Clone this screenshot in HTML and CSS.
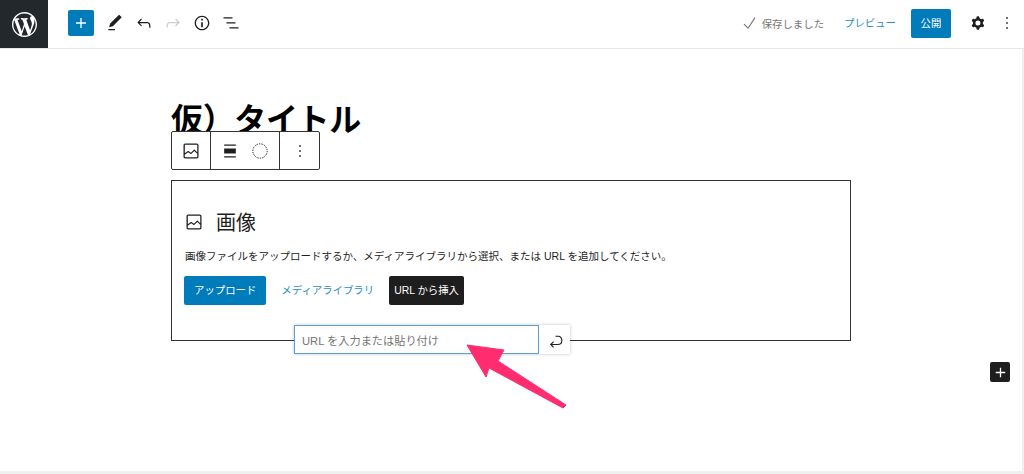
FILE: index.html
```html
<!DOCTYPE html>
<html lang="ja">
<head>
<meta charset="utf-8">
<title>仮）タイトル</title>
<link rel="stylesheet" href="styles.css">
</head>
<body>
<div class="app">
  <header class="topbar">
    <div class="logo">
      <svg class="logo-mark" viewBox="0 0 20 20"><path d="M20 10c0-5.51-4.49-10-10-10C4.48 0 0 4.49 0 10c0 5.52 4.48 10 10 10 5.51 0 10-4.48 10-10zM7.78 15.37L4.37 6.22c.55-.02 1.17-.08 1.17-.08.5-.06.44-1.13-.06-1.11 0 0-1.45.11-2.37.11-.18 0-.37 0-.58-.01C4.12 2.69 6.87 1.11 10 1.11c2.33 0 4.45.87 6.05 2.34-.68-.11-1.65.39-1.65 1.58 0 .74.45 1.36.9 2.1.35.61.55 1.36.55 2.46 0 1.49-1.4 5-1.4 5l-3.03-8.37c.54-.02.82-.17.82-.17.5-.05.44-1.25-.06-1.22 0 0-1.44.12-2.38.12-.87 0-2.33-.12-2.33-.12-.5-.03-.56 1.2-.06 1.22l.92.08 1.26 3.41zM17.41 10c.24-.64.74-1.87.43-4.25.7 1.29 1.05 2.71 1.05 4.25 0 3.29-1.73 6.24-4.4 7.78.97-2.59 1.94-5.2 2.92-7.78zM6.1 18.09C3.12 16.65 1.11 13.53 1.11 10c0-1.3.23-2.48.72-3.59C3.25 10.3 4.67 14.2 6.1 18.09zm4.03-6.63l2.58 6.98c-.86.29-1.76.45-2.71.45-.79 0-1.57-.11-2.29-.33.81-2.38 1.62-4.74 2.42-7.1z"/></svg>
    </div>
    <div class="tools">
      <span class="add"><svg class="ico-add" viewBox="0 0 24 24"><path d="M18 11.2h-5.2V6h-1.6v5.2H6v1.6h5.2V18h1.6v-5.2H18z"/></svg></span>
      <svg class="ico" viewBox="0 0 24 24"><path d="M20.1 5.1L16.9 2 6.2 12.7l-1.3 4.4 4.5-1.3L20.1 5.1zM4 20.8h8v-1.5H4v1.5z"/></svg>
      <svg class="ico" viewBox="0 0 24 24"><path d="M18.3 11.7c-.6-.6-1.4-.9-2.3-.9H6.7l2.9-3.3-1.1-1-4.5 5L8.5 16l1-1-2.7-2.7H16c.5 0 .9.2 1.3.5 1 1 1 3.4 1 4.5v.3h1.5v-.2c0-1.5 0-4.3-1.5-5.7z"/></svg>
      <svg class="ico ico-off" viewBox="0 0 24 24"><path d="M15.6 6.5l-1.1 1 2.9 3.3H8c-.9 0-1.7.3-2.3.9-1.4 1.5-1.4 4.2-1.4 5.6v.2h1.5v-.3c0-1.1 0-3.5 1-4.5.3-.3.7-.5 1.3-.5h9.2L14.5 15l1.1 1.1 4.6-4.6-4.6-5z"/></svg>
      <svg class="ico" viewBox="0 0 24 24"><path d="M12 3.2c-4.8 0-8.8 3.9-8.8 8.8 0 4.8 3.9 8.8 8.8 8.8 4.8 0 8.8-3.9 8.8-8.8 0-4.8-4-8.8-8.8-8.8zm0 16c-4 0-7.2-3.3-7.2-7.2C4.8 8 8 4.8 12 4.8s7.2 3.3 7.2 7.2c0 4-3.2 7.2-7.2 7.2zM11 17h2v-6h-2v6zm0-8h2V7h-2v2z"/></svg>
      <svg class="ico" viewBox="0 0 24 24"><path d="M13.8 5.2H3v1.5h10.8V5.2zm-3.6 12v1.5H21v-1.5H10.2zm7.2-6H6.6v1.5h10.8v-1.5z"/></svg>
    </div>
    <div class="actions">
      <span class="saved"><svg class="ico-check" viewBox="0 0 20 20"><path d="M5 11.2l4 4L16 4.6"/></svg>保存しました</span>
      <span class="preview">プレビュー</span>
      <span class="publish">公開</span>
      <svg class="ico ico-cog" viewBox="0 0 24 24"><path fill-rule="evenodd" d="M10.289 4.836A1 1 0 0111.275 4h1.306a1 1 0 01.987.836l.244 1.466c.787.26 1.503.679 2.108 1.218l1.393-.522a1 1 0 011.216.437l.653 1.13a1 1 0 01-.23 1.273l-1.148.944a6.025 6.025 0 010 2.435l1.149.946a1 1 0 01.23 1.272l-.653 1.13a1 1 0 01-1.216.437l-1.394-.522c-.605.54-1.32.958-2.108 1.218l-.244 1.466a1 1 0 01-.987.836h-1.306a1 1 0 01-.986-.836l-.244-1.466a5.995 5.995 0 01-2.108-1.218l-1.394.522a1 1 0 01-1.217-.436l-.653-1.131a1 1 0 01.23-1.272l1.149-.946a6.026 6.026 0 010-2.435l-1.148-.944a1 1 0 01-.23-1.272l.653-1.131a1 1 0 011.217-.437l1.393.522a5.994 5.994 0 012.108-1.218l.244-1.466zM14.929 12a3 3 0 11-6 0 3 3 0 016 0z"/></svg>
      <svg class="ico ico-more" viewBox="0 0 24 24"><path d="M13 19h-2v-2h2v2zm0-6h-2v-2h2v2zm0-6h-2V5h2v2z"/></svg>
    </div>
  </header>
  <main class="canvas">
    <div class="column">
      <h1 class="post-title">仮）タイトル</h1>
      <div class="block-toolbar">
        <div class="tb-group">
          <svg class="tb-ico" viewBox="0 0 24 24"><path d="M19 3H5c-1.1 0-2 .9-2 2v14c0 1.1.9 2 2 2h14c1.1 0 2-.9 2-2V5c0-1.1-.9-2-2-2zM5 4.5h14c.3 0 .5.2.5.5v8.4l-3-2.9c-.3-.3-.8-.3-1 0L11.9 14 9 12c-.3-.2-.6-.2-.8 0l-3.6 2.6V5c-.1-.3.1-.5.4-.5zm14 15H5c-.3 0-.5-.2-.5-.5v-2.4l4.1-3 3 1.9c.3.2.7.2.9-.1L16 12l3.5 3.4V19c0 .3-.2.5-.5.5z"/></svg>
        </div>
        <div class="tb-group tb-middle">
          <svg class="tb-ico" viewBox="0 0 24 24"><path d="M5 15h14V9H5v6zm0 4.8h14v-1.5H5v1.5zM5 4.2v1.5h14V4.2H5z"/></svg>
          <svg class="tb-ico" viewBox="0 0 24 24"><circle class="dotted" cx="12" cy="12" r="8.6"/></svg>
        </div>
        <div class="tb-group tb-last">
          <svg class="tb-ico" viewBox="0 0 24 24"><path d="M13 19h-2v-2h2v2zm0-6h-2v-2h2v2zm0-6h-2V5h2v2z"/></svg>
        </div>
      </div>
      <section class="placeholder">
        <div class="ph-label">
          <svg class="ph-ico" viewBox="0 0 24 24"><path d="M19 3H5c-1.1 0-2 .9-2 2v14c0 1.1.9 2 2 2h14c1.1 0 2-.9 2-2V5c0-1.1-.9-2-2-2zM5 4.5h14c.3 0 .5.2.5.5v8.4l-3-2.9c-.3-.3-.8-.3-1 0L11.9 14 9 12c-.3-.2-.6-.2-.8 0l-3.6 2.6V5c-.1-.3.1-.5.4-.5zm14 15H5c-.3 0-.5-.2-.5-.5v-2.4l4.1-3 3 1.9c.3.2.7.2.9-.1L16 12l3.5 3.4V19c0 .3-.2.5-.5.5z"/></svg>
          <span>画像</span>
        </div>
        <p class="ph-desc">画像ファイルをアップロードするか、メディアライブラリから選択、または URL を追加してください。</p>
        <div class="ph-buttons">
          <span class="btn btn-primary">アップロード</span>
          <span class="btn btn-link">メディアライブラリ</span>
          <span class="btn btn-dark">URL から挿入</span>
        </div>
        <div class="url-popover">
          <div class="url-input">URL を入力または貼り付け</div>
          <div class="url-submit">
            <svg class="ico" viewBox="0 0 20 20"><path class="return" d="M10.5 6.3h2.7c5 0 5 8.2-.5 8.2H6.2M8.6 11.6l-2.9 2.9 2.9 2.8"/></svg>
          </div>
        </div>
      </section>
    </div>
    <span class="inserter"><svg class="ico-add" viewBox="0 0 24 24"><path d="M18 11.2h-5.2V6h-1.6v5.2H6v1.6h5.2V18h1.6v-5.2H18z"/></svg></span>
  </main>
  <svg class="annotation" viewBox="0 0 1024 474"><polygon points="467,345 504,350 498,361 566,405 563,408 489,368 486,377"/></svg>
</div>
</body>
</html>
```
FILE: styles.css
```css
* { box-sizing: border-box; }
html, body { margin: 0; padding: 0; background: #fff; }
body {
  font-family: "Liberation Sans", "Noto Sans CJK JP", sans-serif;
  font-size: 10.4px;
  color: #1e1e1e;
  overflow: hidden;
}
.app { position: relative; width: 1024px; height: 474px; display: flex; flex-direction: column; overflow: hidden; }

.topbar { flex: 0 0 49px; display: flex; align-items: flex-start; border-bottom: 1px solid #e8e8e8; }
.logo { width: 48px; height: 48px; background: #23282d; display: flex; align-items: center; justify-content: center; }
.logo-mark { width: 25px; height: 25px; fill: #fff; }
.tools { display: flex; align-items: center; height: 46px; padding-left: 20px; }
.add { width: 26px; height: 26px; border-radius: 2px; background: #007cba; display: flex; align-items: center; justify-content: center; margin-right: 11px; }
.ico-add { width: 20px; height: 20px; fill: #fff; }
.ico { width: 20px; height: 20px; fill: #1e1e1e; flex: none; margin-right: 9px; }
.ico-off { fill: #c9cdd0; }
.actions { margin-left: auto; display: flex; align-items: center; height: 46px; }
.saved { display: flex; align-items: center; color: #757575; margin-right: 20px; font-size: 10.4px; }
.ico-check { width: 20px; height: 20px; fill: none; stroke: #757575; stroke-width: 1.1; margin-right: 3px; }
.preview { color: #2a8cc4; margin: 0 15px 2px 0; font-size: 10.4px; }
.publish { width: 40px; height: 29px; padding-bottom: 2px; border-radius: 2px; background: #007cba; color: #fff; display: flex; align-items: center; justify-content: center; margin-right: 17px; }
.ico-cog { margin-right: 9px; }
.ico-more { margin-right: 7px; }

.canvas { flex: 1; position: relative; padding: 0 2px; border-right: 2px solid #f0f0f0; border-bottom: 3px solid #f0f0f0; }
.column { position: relative; width: 680px; margin: 0 auto; padding-top: 46px; }
.post-title { margin: 0; height: 85px; font-size: 32px; line-height: 44px; letter-spacing: -0.35px; font-weight: 700; color: #000; font-family: "Noto Sans CJK JP", sans-serif; white-space: nowrap; }
.block-toolbar { position: absolute; left: 0; top: 82px; height: 39px; display: flex; background: #fff; border: 1px solid #333; border-radius: 2px; }
.tb-group { display: flex; align-items: center; justify-content: center; padding: 0 9px; border-left: 1px solid #333; }
.tb-group:first-child { border-left: 0; }
.tb-last { padding: 0 9px 0 10px; }
.tb-middle { gap: 10px; }
.tb-ico { width: 20px; height: 20px; fill: #1e1e1e; }
.dotted { fill: none; stroke: #1e1e1e; stroke-width: 1.2; stroke-dasharray: 1.6 1.4; }

.placeholder { position: relative; height: 161px; border: 1px solid #333; padding: 30px 12px 0; }
.ph-label { display: flex; align-items: center; gap: 12px; font-size: 20px; line-height: 22px; font-family: "Noto Sans CJK JP", sans-serif; }
.ph-ico { width: 20px; height: 20px; fill: #1e1e1e; }
.ph-desc { margin: 15px 0 0; padding-left: 1px; font-size: 10.5px; line-height: 16px; }
.ph-buttons { display: flex; margin-top: 12px; }
.btn { height: 29px; display: flex; align-items: center; padding: 0 10px 2px; border-radius: 2px; font-size: 10.4px; }
.btn-primary { background: #007cba; color: #fff; margin-right: 5px; }
.btn-link { color: #2a8cc4; margin-right: 5px; }
.btn-dark { background: #1e1e1e; color: #fff; padding: 0 5px 2px; }
.url-popover { position: absolute; left: 122px; top: 144px; width: 276px; height: 29px; display: flex; background: #fff; box-shadow: 0 0 3px rgba(0,0,0,.25); }
.url-input { width: 245px; height: 29px; border: 1px solid #5a9fd4; color: #757575; display: flex; align-items: center; padding-left: 7px; font-size: 11.2px; }
.url-submit { flex: 1; display: flex; align-items: center; justify-content: center; }
.url-submit .ico { margin: 0; }
.return { fill: none; stroke: #1e1e1e; stroke-width: 1.1; }
.inserter { position: absolute; left: 990px; top: 313px; width: 20px; height: 20px; border-radius: 2px; background: #1e1e1e; display: flex; align-items: center; justify-content: center; }
.inserter .ico-add { width: 19px; height: 19px; }
.annotation { position: absolute; left: 0; top: 0; width: 1024px; height: 474px; pointer-events: none; }
.annotation polygon { fill: #ff2d6f; stroke: #ff2d6f; stroke-width: 1; stroke-linejoin: round; }
```
